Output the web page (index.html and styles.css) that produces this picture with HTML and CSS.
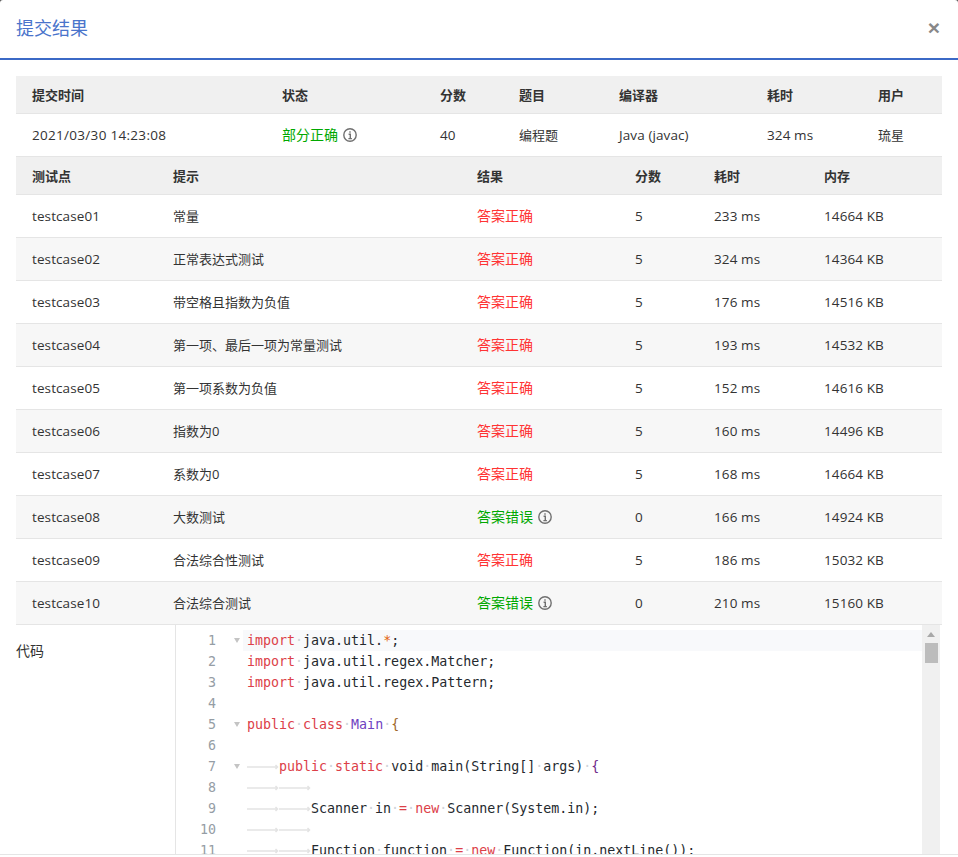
FILE: index.html
```html
<!DOCTYPE html>
<html lang="zh-CN">
<head>
<meta charset="utf-8">
<title>提交结果</title>
<link rel="stylesheet" href="styles.css">
</head>
<body>
<div class="modal">
  <header class="modal-head">
    <h2 class="modal-title">提交结果</h2>
    <span class="close">×</span>
  </header>
  <main class="modal-body">
    <table class="grid summary">
      <colgroup><col class="s1"><col class="s2"><col class="s3"><col class="s4"><col class="s5"><col class="s6"><col></colgroup>
      <thead><tr><th>提交时间</th><th>状态</th><th>分数</th><th>题目</th><th>编译器</th><th>耗时</th><th>用户</th></tr></thead>
      <tbody><tr><td>2021/03/30 14:23:08</td><td><span class="ok">部分正确</span><svg class="info" viewBox="0 0 14 14"><circle cx="7" cy="7" r="6.2"/><path d="M7 3.2v1.6M5.6 6.2H7.3V10.4M5.4 10.6H8.9"/></svg></td><td>40</td><td>编程题</td><td>Java (javac)</td><td>324 ms</td><td>琉星</td></tr></tbody>
    </table>
    <table class="grid cases">
      <colgroup><col class="c1"><col class="c2"><col class="c3"><col class="c4"><col class="c5"><col></colgroup>
      <thead><tr><th>测试点</th><th>提示</th><th>结果</th><th>分数</th><th>耗时</th><th>内存</th></tr></thead>
      <tbody>
        <tr><td>testcase01</td><td>常量</td><td><span class="bad">答案正确</span></td><td>5</td><td>233 ms</td><td>14664 KB</td></tr>
        <tr><td>testcase02</td><td>正常表达式测试</td><td><span class="bad">答案正确</span></td><td>5</td><td>324 ms</td><td>14364 KB</td></tr>
        <tr><td>testcase03</td><td>带空格且指数为负值</td><td><span class="bad">答案正确</span></td><td>5</td><td>176 ms</td><td>14516 KB</td></tr>
        <tr><td>testcase04</td><td>第一项、最后一项为常量测试</td><td><span class="bad">答案正确</span></td><td>5</td><td>193 ms</td><td>14532 KB</td></tr>
        <tr><td>testcase05</td><td>第一项系数为负值</td><td><span class="bad">答案正确</span></td><td>5</td><td>152 ms</td><td>14616 KB</td></tr>
        <tr><td>testcase06</td><td>指数为0</td><td><span class="bad">答案正确</span></td><td>5</td><td>160 ms</td><td>14496 KB</td></tr>
        <tr><td>testcase07</td><td>系数为0</td><td><span class="bad">答案正确</span></td><td>5</td><td>168 ms</td><td>14664 KB</td></tr>
        <tr><td>testcase08</td><td>大数测试</td><td><span class="ok">答案错误</span><svg class="info" viewBox="0 0 14 14"><circle cx="7" cy="7" r="6.2"/><path d="M7 3.2v1.6M5.6 6.2H7.3V10.4M5.4 10.6H8.9"/></svg></td><td>0</td><td>166 ms</td><td>14924 KB</td></tr>
        <tr><td>testcase09</td><td>合法综合性测试</td><td><span class="bad">答案正确</span></td><td>5</td><td>186 ms</td><td>15032 KB</td></tr>
        <tr><td>testcase10</td><td>合法综合测试</td><td><span class="ok">答案错误</span><svg class="info" viewBox="0 0 14 14"><circle cx="7" cy="7" r="6.2"/><path d="M7 3.2v1.6M5.6 6.2H7.3V10.4M5.4 10.6H8.9"/></svg></td><td>0</td><td>210 ms</td><td>15160 KB</td></tr>
      </tbody>
    </table>
    <section class="code-row">
      <div class="code-label">代码</div>
      <div class="editor">
        <div class="gutter">
          <div class="gl"><span class="num">1</span><span class="fold"></span></div>
          <div class="gl"><span class="num">2</span></div>
          <div class="gl"><span class="num">3</span></div>
          <div class="gl"><span class="num">4</span></div>
          <div class="gl"><span class="num">5</span><span class="fold"></span></div>
          <div class="gl"><span class="num">6</span></div>
          <div class="gl"><span class="num">7</span><span class="fold"></span></div>
          <div class="gl"><span class="num">8</span></div>
          <div class="gl"><span class="num">9</span></div>
          <div class="gl"><span class="num">10</span></div>
          <div class="gl"><span class="num">11</span></div>
        </div>
        <div class="code">
          <div class="line current"><b class="kw">import</b><i>·</i>java.util.<b class="star">*</b>;</div>
          <div class="line"><b class="kw">import</b><i>·</i>java.util.regex.Matcher;</div>
          <div class="line"><b class="kw">import</b><i>·</i>java.util.regex.Pattern;</div>
          <div class="line"></div>
          <div class="line"><b class="kw">public</b><i>·</i><b class="kw">class</b><i>·</i><b class="cls">Main</b><i>·</i><b class="br1">{</b></div>
          <div class="line"></div>
          <div class="line"><svg class="tab" viewBox="0 0 32 10"><path d="M0 5H30.5M28.5 3L30.5 5L28.5 7"/></svg><b class="kw">public</b><i>·</i><b class="kw">static</b><i>·</i>void<i>·</i>main(String[]<i>·</i>args)<i>·</i><b class="br2">{</b></div>
          <div class="line"><svg class="tab" viewBox="0 0 32 10"><path d="M0 5H30.5M28.5 3L30.5 5L28.5 7"/></svg><svg class="tab" viewBox="0 0 32 10"><path d="M0 5H30.5M28.5 3L30.5 5L28.5 7"/></svg></div>
          <div class="line"><svg class="tab" viewBox="0 0 32 10"><path d="M0 5H30.5M28.5 3L30.5 5L28.5 7"/></svg><svg class="tab" viewBox="0 0 32 10"><path d="M0 5H30.5M28.5 3L30.5 5L28.5 7"/></svg>Scanner<i>·</i>in<i>·</i><b class="kw">=</b><i>·</i><b class="kw">new</b><i>·</i>Scanner(System.in);</div>
          <div class="line"><svg class="tab" viewBox="0 0 32 10"><path d="M0 5H30.5M28.5 3L30.5 5L28.5 7"/></svg><svg class="tab" viewBox="0 0 32 10"><path d="M0 5H30.5M28.5 3L30.5 5L28.5 7"/></svg></div>
          <div class="line"><svg class="tab" viewBox="0 0 32 10"><path d="M0 5H30.5M28.5 3L30.5 5L28.5 7"/></svg><svg class="tab" viewBox="0 0 32 10"><path d="M0 5H30.5M28.5 3L30.5 5L28.5 7"/></svg>Function<i>·</i>function<i>·</i><b class="kw">=</b><i>·</i><b class="kw">new</b><i>·</i>Function(in.nextLine());</div>
        </div>
        <div class="scrollbar">
          <span class="up"></span>
          <span class="thumb"></span>
        </div>
      </div>
    </section>
  </main>
  <footer class="modal-foot"></footer>
</div>
</body>
</html>
```

FILE: styles.css
```css
* { box-sizing: border-box; }
html, body { margin: 0; height: 100%; background: #555; }
body {
  font-family: "Open Sans", "Noto Sans CJK SC", sans-serif;
  font-size: 13px;
  color: #333;
  overflow: hidden;
}
.modal { height: 857px; display: flex; flex-direction: column; overflow: hidden; background: #fff; border-radius: 3px 3px 0 0; }
.modal-head {
  height: 60px;
  flex: none;
  display: flex;
  align-items: center;
  justify-content: space-between;
  padding: 0 16px 3px;
  border-bottom: 2px solid #3b69c6;
}
.modal-title { margin: 0; font-size: 18px; font-weight: 400; line-height: 24px; color: #4a74cb; }
.close { font: 700 21px/1 "Liberation Sans", sans-serif; color: #888; margin-right: 2px; }
.modal-body { flex: 1; min-height: 0; overflow: hidden; padding: 16px 16px 0; }
.modal-foot { height: 3px; flex: none; border-top: 1px solid #e5e5e5; }

.grid { width: 926px; table-layout: fixed; border-collapse: separate; border-spacing: 0; }
.grid th, .grid td { padding: 0 0 0 16px; text-align: left; border-bottom: 1px solid #e5e5e5; white-space: nowrap; line-height: 18px; }
.grid th { height: 38px; font-weight: 700; background: #f0f0f0; }
.grid td { height: 43px; font-size: 13.5px; letter-spacing: .1px; }
.summary td:first-child { letter-spacing: .3px; }
.summary td:nth-child(4), .summary td:nth-child(7), .cases td:nth-child(2) { font-size: 13px; letter-spacing: 0; }
.cases tbody tr:nth-child(even) td { background: #f7f7f7; }
.s1 { width: 250px; } .s2 { width: 158px; } .s3 { width: 79px; } .s4 { width: 100px; } .s5 { width: 148px; } .s6 { width: 111px; }
.c1 { width: 141px; } .c2 { width: 304px; } .c3 { width: 158px; } .c4 { width: 79px; } .c5 { width: 110px; }
.ok { color: #00a800; font-size: 14px; letter-spacing: 0; }
.bad { color: #ff3333; font-size: 14px; letter-spacing: 0; }
.info { width: 14px; height: 14px; margin-left: 5px; vertical-align: -2px; fill: none; stroke: #707070; stroke-width: 1.4; }

.code-row { display: flex; }
.code-label { width: 159px; flex: none; padding-top: 17px; font-size: 14px; line-height: 18px; }
.editor {
  width: 765px;
  height: 300px;
  flex: none;
  display: flex;
  padding-top: 5px;
  border-left: 1px solid #e5e5e5;
  font-family: "DejaVu Sans Mono", monospace;
  font-size: 13.3px;
  line-height: 21px;
  color: #24292e;
}
.gutter { width: 67px; flex: none; }
.gl { height: 21px; display: flex; align-items: center; }
.num { width: 40px; text-align: right; color: #959da5; }
.fold { width: 0; height: 0; margin-left: 18px; border: 3px solid transparent; border-top: 5px solid #c4c4c4; border-bottom: 0; }
.code { flex: 1; min-width: 0; }
.line { height: 21px; padding-left: 4px; white-space: pre; }
.current { background: #f8f9fb; }
.line b { font-weight: 400; }
.line i { font-style: normal; color: #cfd4d9; }
.kw { color: #dc4048; }
.star { color: #e36209; }
.cls { color: #6f42c1; }
.br1 { color: #a0672a; }
.br2 { color: #6f2a8a; }
.tab { width: 32px; height: 10px; vertical-align: -1px; fill: none; stroke: #e3e3e3; stroke-width: 1.5; }
.scrollbar { width: 18px; flex: none; margin-top: -5px; background: #f0f0f0; display: flex; flex-direction: column; align-items: center; }
.up { width: 0; height: 0; margin-top: 7px; border: 4px solid transparent; border-bottom: 5px solid #a8a8a8; border-top: 0; }
.thumb { width: 13px; height: 20px; margin-top: 6px; background: #bcbcbc; }
```
